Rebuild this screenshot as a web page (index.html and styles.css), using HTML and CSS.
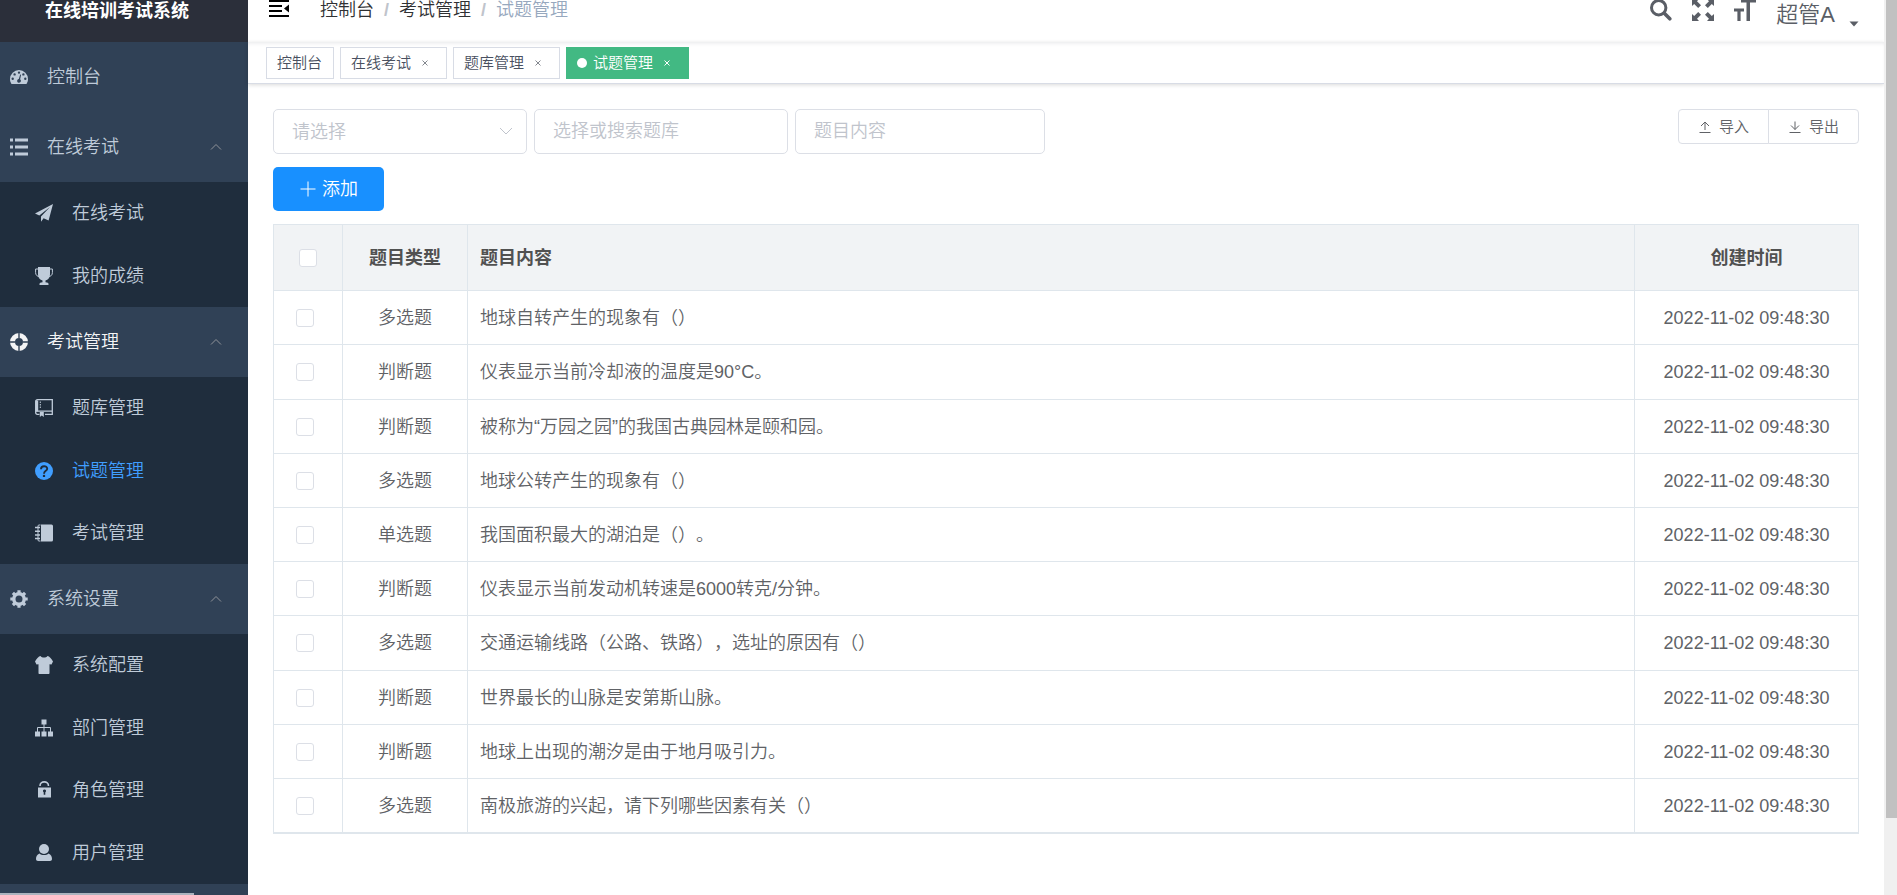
FILE: index.html
```
<!DOCTYPE html>
<html lang="zh-CN">
<head>
<meta charset="utf-8">
<title>在线培训考试系统</title>
<link rel="stylesheet" href="styles.css">
</head>
<body>
<div class="app">
  <aside class="sidebar">
    <h1 class="logo">在线培训考试系统</h1>
    <nav class="menu">
      <a class="menu-item" href="#">
        <svg class="icon" viewBox="0 0 18 18"><path fill="currentColor" fill-rule="evenodd" d="M9 2a9 9 0 0 0-9 9c0 2 .6 3.500 1.500 5h15c.9-1.500 1.500-3 1.500-5a9 9 0 0 0-9-9zM9 3.400a1.200 1.200 0 1 1 0 2.400 1.200 1.200 0 0 1 0-2.400zM4.600 5.200a1.200 1.200 0 1 1 0 2.400 1.200 1.200 0 0 1 0-2.400zM13.400 5.200a1.200 1.200 0 1 1 0 2.400 1.200 1.200 0 0 1 0-2.400zM2.700 9.600a1.200 1.200 0 1 1 0 2.400 1.200 1.200 0 0 1 0-2.400zM15.300 9.600a1.200 1.200 0 1 1 0 2.400 1.200 1.200 0 0 1 0-2.400zM10.200 6.500l.9.3-1 4.500a1.900 1.900 0 1 1-1.300-.3z"/></svg>
        <span>控制台</span>
      </a>
      <a class="menu-item" href="#">
        <svg class="icon" viewBox="0 0 18 18"><path fill="currentColor" d="M0 .5h3v3H0zM5 .5h13v3H5zM0 7.500h3v3H0zM5 7.500h13v3H5zM0 14.500h3v3H0zM5 14.500h13v3H5z"/></svg>
        <span>在线考试</span>
        <svg class="arrow" viewBox="0 0 12 8"><path d="M1 6.500l5-5 5 5"/></svg>
      </a>
      <div class="submenu">
        <a class="sub-item" href="#">
          <svg class="icon" viewBox="0 0 18 18"><path fill="currentColor" d="M18 0L0 9.500l4.300 1.900L15 3 6 12.500v5.300l2.600-3.600 5 2.300z"/></svg>
          <span>在线考试</span>
        </a>
        <a class="sub-item" href="#">
          <svg class="icon" viewBox="0 0 18 18"><path fill="currentColor" d="M3 0h12v7.500c0 3-2 5.500-4.500 6v1.800c2 0 3 .7 3 1.700v1h-9v-1c0-1 1-1.700 3-1.700v-1.800C5 13 3 10.500 3 7.500z"/><path fill="none" stroke="currentColor" d="M3.500 2H.6v3.500c0 2.500 1.500 4 4 4M14.500 2h2.900v3.500c0 2.500-1.500 4-4 4"/></svg>
          <span>我的成绩</span>
        </a>
      </div>
      <a class="menu-item is-open" href="#">
        <svg class="icon" viewBox="0 0 18 18"><circle cx="9" cy="9" r="6.500" fill="none" stroke="currentColor" stroke-width="5"/><path stroke="#304156" stroke-width="1.400" d="M9 0v5M9 13v5M0 9h5M13 9h5"/></svg>
        <span>考试管理</span>
        <svg class="arrow" viewBox="0 0 12 8"><path d="M1 6.500l5-5 5 5"/></svg>
      </a>
      <div class="submenu">
        <a class="sub-item" href="#">
          <svg class="icon" viewBox="0 0 18 18"><path fill="none" stroke="currentColor" stroke-width="1.300" d="M2.500.7h14.800v14.600H10M4.500 15.300H2.300A1.600 1.600 0 0 1 .7 13.500V2.500A1.800 1.800 0 0 1 2.500.7M1 12.200h16"/><path fill="currentColor" d="M.6 1.500h2.600v11H.6zM4.800 2.500h1v1.500h-1zM4.800 5h1v1.500h-1zM4.800 7.500h1V9h-1zM4.800 13h4v5l-2-1.500-2 1.500z"/></svg>
          <span>题库管理</span>
        </a>
        <a class="sub-item is-active" href="#">
          <svg class="icon" viewBox="0 0 18 18"><circle cx="9" cy="9" r="9" fill="currentColor"/><path fill="none" stroke="#1f2d3d" stroke-width="1.900" d="M6 7.200c0-4 6.200-3.800 6.200-.5C12.200 9 9 8.700 9 11.700"/><path fill="#1f2d3d" d="M7.900 12.900h2.200V15H7.900z"/></svg>
          <span>试题管理</span>
        </a>
        <a class="sub-item" href="#">
          <svg class="icon" viewBox="0 0 18 18"><path fill="currentColor" d="M6 .5h10.500A1.500 1.500 0 0 1 18 2v14a1.500 1.500 0 0 1-1.500 1.500H6z"/><path fill="none" stroke="currentColor" d="M5.500 1H4a1 1 0 0 0-1 1v14a1 1 0 0 0 1 1h1.500"/><path stroke="currentColor" stroke-width="1.500" d="M0 3.500h5M0 7.200h5M0 10.900h5M0 14.600h5"/></svg>
          <span>考试管理</span>
        </a>
      </div>
      <a class="menu-item" href="#">
        <svg class="icon" viewBox="0 0 18 18"><circle cx="9" cy="9" r="5.200" fill="none" stroke="currentColor" stroke-width="3.400"/><path stroke="currentColor" stroke-width="3.200" d="M9 .3v3M9 14.700v3M.3 9h3M14.700 9h3M2.900 2.900l2 2M13.100 13.100l2 2M15.100 2.900l-2 2M4.900 13.100l-2 2"/></svg>
        <span>系统设置</span>
        <svg class="arrow" viewBox="0 0 12 8"><path d="M1 6.500l5-5 5 5"/></svg>
      </a>
      <div class="submenu">
        <a class="sub-item" href="#">
          <svg class="icon" viewBox="0 0 18 18"><path fill="currentColor" d="M5.500 0c1.500 2 5.500 2 7 0 2 .6 3.500 2 5.500 5.500l-1.500 3-2-.3V17c0 .6-.4 1-1 1h-9c-.6 0-1-.4-1-1V8.200l-2 .3-1.500-3C2 2 3.500.6 5.500 0z"/></svg>
          <span>系统配置</span>
        </a>
        <a class="sub-item" href="#">
          <svg class="icon" viewBox="0 0 18 18"><path fill="currentColor" d="M6.500.5h5v5h-5zM0 12.500h5v5H0zM6.500 12.500h5v5h-5zM13 12.500h5v5h-5z"/><path fill="none" stroke="currentColor" d="M9 5v8M2.500 13V8.500h13V13"/></svg>
          <span>部门管理</span>
        </a>
        <a class="sub-item" href="#">
          <svg class="icon" viewBox="0 0 18 18"><path fill="none" stroke="currentColor" stroke-width="1.600" d="M5 5C5-.5 13.500-.5 13.500 5"/><path fill="currentColor" fill-rule="evenodd" d="M3 6.500h13v10H3zM9.500 8.500a1.500 1.500 0 0 0-.8 2.800v2.400h1.600v-2.400a1.500 1.500 0 0 0-.8-2.800z"/></svg>
          <span>角色管理</span>
        </a>
        <a class="sub-item" href="#">
          <svg class="icon" viewBox="0 0 18 18"><circle cx="9" cy="5" r="5" fill="currentColor"/><path fill="currentColor" d="M4.500 9.500C6.500 11.500 11.500 11.500 13.500 9.500 16 10.500 17 12.500 17 15c0 1.200-.8 2-2 2H3c-1.200 0-2-.8-2-2 0-2.500 1-4.500 3.500-5.500z"/></svg>
          <span>用户管理</span>
        </a>
      </div>
    </nav>
    <div class="h-thumb"></div>
  </aside>

  <div class="main">
    <header class="navbar">
      <div class="navbar-inner">
        <button class="icon-button" type="button" aria-label="收起菜单">
          <svg class="hamburger" viewBox="0 0 20 20"><path fill="none" stroke="#000" stroke-width="2" d="M0 4h20M0 9h13M0 14h13M0 19h20"/><path fill="#000" d="M20 7.500v8l-5-4z"/></svg>
        </button>
        <nav class="breadcrumb">
          <a href="#">控制台</a><span class="slash">/</span><a href="#">考试管理</a><span class="slash">/</span><span class="current">试题管理</span>
        </nav>
        <div class="tools">
          <button class="icon-button" type="button" aria-label="搜索">
            <svg class="tool" viewBox="0 0 22 22"><circle cx="8.700" cy="8.700" r="7.200" fill="none" stroke="currentColor" stroke-width="3"/><path stroke="currentColor" stroke-width="3.600" stroke-linecap="round" d="M14.300 14.300l5.500 5.500"/></svg>
          </button>
          <button class="icon-button" type="button" aria-label="全屏">
            <svg class="tool" viewBox="0 0 22 22"><path fill="currentColor" d="M0 0h7L5 2.200l4 4L6.200 9l-4-4L0 7zM22 0v7l-2.200-2-4 4L13 6.200l4-4L15 0zM0 22v-7l2.200 2 4-4L9 15.800l-4 4L7 22zM22 22h-7l2-2.200-4-4 2.800-2.800 4 4 2.200-2z"/></svg>
          </button>
          <button class="icon-button" type="button" aria-label="字号">
            <svg class="tool" viewBox="0 0 22 22"><path fill="currentColor" d="M7 0h15v3.500h-6V22h-3.500V3.500H7zM0 9.500h10v3H6.600V22H3.400v-9.500H0z"/></svg>
          </button>
          <button class="user" type="button"><span>超管A</span><svg class="caret" viewBox="0 0 10 6"><path fill="currentColor" d="M.5.500h9L5 5.500z"/></svg></button>
        </div>
      </div>
    </header>

    <nav class="tags">
      <a class="tag" href="#">控制台</a>
      <a class="tag" href="#">在线考试<svg class="close" viewBox="0 0 20 20"><path d="M7.500 7.500l5 5M12.500 7.500l-5 5"/></svg></a>
      <a class="tag" href="#">题库管理<svg class="close" viewBox="0 0 20 20"><path d="M7.500 7.500l5 5M12.500 7.500l-5 5"/></svg></a>
      <a class="tag tag-active" href="#"><i class="dot"></i>试题管理<svg class="close" viewBox="0 0 20 20"><path d="M7.500 7.500l5 5M12.500 7.500l-5 5"/></svg></a>
    </nav>

    <main class="content">
      <div class="filters">
        <div class="fields">
          <div class="select-wrap">
            <select class="field" aria-label="题目类型"><option>请选择</option></select>
            <svg class="chevron" viewBox="0 0 14 8"><path d="M1 1l6 6 6-6"/></svg>
          </div>
          <input class="field" type="text" placeholder="选择或搜索题库" aria-label="题库">
          <input class="field field-text" type="text" placeholder="题目内容" aria-label="题目内容">
        </div>
        <div class="group">
          <button class="small-button" type="button"><svg class="small-icon" viewBox="0 0 12 12"><path d="M6 9V1M2 5l4-4 4 4M.5 11.500h11"/></svg>导入</button>
          <button class="small-button" type="button"><svg class="small-icon" viewBox="0 0 12 12"><path d="M6 .5v8M2 4.500l4 4 4-4M.5 11.500h11"/></svg>导出</button>
        </div>
      </div>
      <button class="add" type="button"><svg class="plus" viewBox="0 0 16 16"><path d="M8 .5v15M.5 8h15"/></svg>添加</button>

      <table class="table">
        <colgroup><col class="col-check"><col class="col-type"><col><col class="col-time"></colgroup>
        <thead>
          <tr><th class="center"><input class="check" type="checkbox" aria-label="全选"></th><th class="center">题目类型</th><th>题目内容</th><th class="center">创建时间</th></tr>
        </thead>
        <tbody>
          <tr><td class="pick"><input class="check" type="checkbox" aria-label="选择"></td><td class="center">多选题</td><td>地球自转产生的现象有（）</td><td class="center">2022-11-02 09:48:30</td></tr>
          <tr><td class="pick"><input class="check" type="checkbox" aria-label="选择"></td><td class="center">判断题</td><td>仪表显示当前冷却液的温度是90°C。</td><td class="center">2022-11-02 09:48:30</td></tr>
          <tr><td class="pick"><input class="check" type="checkbox" aria-label="选择"></td><td class="center">判断题</td><td>被称为“万园之园”的我国古典园林是颐和园。</td><td class="center">2022-11-02 09:48:30</td></tr>
          <tr><td class="pick"><input class="check" type="checkbox" aria-label="选择"></td><td class="center">多选题</td><td>地球公转产生的现象有（）</td><td class="center">2022-11-02 09:48:30</td></tr>
          <tr><td class="pick"><input class="check" type="checkbox" aria-label="选择"></td><td class="center">单选题</td><td>我国面积最大的湖泊是（）。</td><td class="center">2022-11-02 09:48:30</td></tr>
          <tr><td class="pick"><input class="check" type="checkbox" aria-label="选择"></td><td class="center">判断题</td><td>仪表显示当前发动机转速是6000转克/分钟。</td><td class="center">2022-11-02 09:48:30</td></tr>
          <tr><td class="pick"><input class="check" type="checkbox" aria-label="选择"></td><td class="center">多选题</td><td>交通运输线路（公路、铁路），选址的原因有（）</td><td class="center">2022-11-02 09:48:30</td></tr>
          <tr><td class="pick"><input class="check" type="checkbox" aria-label="选择"></td><td class="center">判断题</td><td>世界最长的山脉是安第斯山脉。</td><td class="center">2022-11-02 09:48:30</td></tr>
          <tr><td class="pick"><input class="check" type="checkbox" aria-label="选择"></td><td class="center">判断题</td><td>地球上出现的潮汐是由于地月吸引力。</td><td class="center">2022-11-02 09:48:30</td></tr>
          <tr><td class="pick"><input class="check" type="checkbox" aria-label="选择"></td><td class="center">多选题</td><td>南极旅游的兴起，请下列哪些因素有关（）</td><td class="center">2022-11-02 09:48:30</td></tr>
        </tbody>
      </table>
    </main>
  </div>
  <div class="scrollbar"><div class="thumb"></div></div>
</div>
</body>
</html>
```

FILE: styles.css
```
* {
  box-sizing: border-box;
}

body {
  margin: 0;
  background: #fff;
  color: #606266;
  font-family: "Liberation Sans", "Noto Sans CJK SC", sans-serif;
  font-size: 18px;
  font-weight: 350;
  line-height: 24px;
  text-spacing-trim: space-all;
}

a {
  color: inherit;
  text-decoration: none;
}

button,
input,
select {
  font: inherit;
  color: inherit;
}

svg {
  display: block;
  flex: none;
}

.app {
  display: flex;
  height: 100vh;
  overflow: hidden;
}

/* Sidebar */
.sidebar {
  display: flex;
  flex-direction: column;
  flex: none;
  width: 248px;
  overflow: hidden;
  background: #304156;
  color: #bfcbd9;
}

.logo {
  display: flex;
  flex: none;
  align-items: flex-end;
  justify-content: center;
  height: 42px;
  margin: 0;
  padding: 0 14px 19px 0;
  background: #2b2f3a;
  color: #fff;
  font-size: 18px;
  font-weight: 700;
}

.menu {
  flex: none;
}

.menu-item,
.sub-item {
  display: flex;
  align-items: center;
  gap: 19px;
}

.menu-item {
  height: 70px;
  padding: 0 26px 0 10px;
}

.submenu {
  background: #1f2d3d;
}

.sub-item {
  height: 62px;
  padding-left: 35px;
}

.sub-item:nth-child(even) {
  height: 63px;
}

.icon {
  width: 18px;
  height: 18px;
}

.arrow {
  width: 12px;
  height: 8px;
  margin-left: auto;
}

.arrow path {
  fill: none;
  stroke: #909399;
}

.is-open {
  color: #f4f4f5;
}

.is-active {
  color: #409eff;
}

.h-thumb {
  width: 194px;
  height: 2px;
  margin-top: auto;
  background: #aab2bd;
}

/* Top bar */
.main {
  flex: 1;
  min-width: 0;
}

.navbar {
  display: flex;
  align-items: flex-end;
  height: 42px;
  overflow: hidden;
}

.navbar-inner {
  display: flex;
  flex: 1;
  align-items: center;
  height: 62px;
  padding: 0 25px 0 21px;
}

.icon-button {
  padding: 0;
  border: 0;
  background: none;
}

.hamburger {
  width: 20px;
  height: 20px;
}

.navbar-inner > .icon-button {
  padding-bottom: 8px;
}

.breadcrumb {
  display: flex;
  margin-left: 31px;
  padding-bottom: 2px;
  color: #303133;
}

.slash {
  margin: 0 10px;
  color: #c0c4cc;
  font-weight: 700;
}

.current {
  color: #97a8be;
}

.tools {
  display: flex;
  align-items: center;
  gap: 20px;
  margin-left: auto;
  color: #5a5e66;
}

.tool {
  width: 22px;
  height: 22px;
}

.tools .icon-button {
  padding-bottom: 2px;
}

.user {
  display: flex;
  align-items: flex-end;
  gap: 14px;
  padding: 8px 0 0;
  border: 0;
  background: none;
  font-size: 22px;
}

.caret {
  width: 10px;
  height: 6px;
}

/* Page tabs */
.tags {
  display: flex;
  gap: 6px;
  height: 42px;
  padding: 5px 18px;
  border-bottom: 1px solid #d8dce5;
  box-shadow: 0 1px 4px rgba(0, 0, 0, 0.15), inset 0 3px 4px -2px rgba(0, 21, 41, 0.1);
}

.tag {
  display: flex;
  align-items: center;
  height: 32px;
  padding: 0 11px 0 10px;
  border: 1px solid #d8dce5;
  color: #495060;
  font-size: 15px;
}

.tag-active {
  border-color: #42b983;
  background: #42b983;
  color: #fff;
}

.dot {
  width: 10px;
  height: 10px;
  margin-right: 6px;
  border-radius: 50%;
  background: #fff;
}

.close {
  width: 20px;
  height: 20px;
  margin-left: 4px;
}

.close path {
  stroke: #84888f;
}

.tag-active .close path {
  stroke: #fff;
}

/* Filters */
.content {
  padding: 25px;
}

.filters,
.fields,
.group {
  display: flex;
}

.filters {
  align-items: flex-start;
  justify-content: space-between;
}

.fields {
  gap: 7px;
}

.select-wrap {
  position: relative;
}

.field {
  display: block;
  width: 254px;
  height: 45px;
  padding: 0 18px;
  border: 1px solid #dcdfe6;
  border-radius: 5px;
  background: #fff;
  color: #c0c4cc;
  appearance: none;
}

.field-text {
  width: 250px;
}

.field::placeholder {
  color: #c0c4cc;
}

.chevron {
  position: absolute;
  top: 18px;
  right: 14px;
  width: 14px;
  height: 8px;
  pointer-events: none;
}

.chevron path {
  fill: none;
  stroke: #c0c4cc;
}

.small-button {
  display: flex;
  align-items: center;
  gap: 8px;
  height: 35px;
  padding: 0 19px 0 20px;
  border: 1px solid #dcdfe6;
  border-radius: 4px 0 0 4px;
  background: #fff;
  font-size: 15px;
}

.small-button + .small-button {
  margin-left: -1px;
  border-radius: 0 4px 4px 0;
}

.small-icon {
  width: 12px;
  height: 12px;
}

.small-icon path,
.plus path {
  fill: none;
  stroke: currentColor;
}

.add {
  display: flex;
  align-items: center;
  gap: 6px;
  height: 44px;
  margin: 13px 0;
  padding: 0 26px 0 27px;
  border: 0;
  border-radius: 5px;
  background: #1890ff;
  color: #fff;
}

.plus {
  width: 16px;
  height: 16px;
}

/* Question table */
.table {
  width: 100%;
  border: 1px solid #dfe6ec;
  border-width: 1px 0 1px 1px;
  border-spacing: 0;
  table-layout: fixed;
}

.col-check {
  width: 69px;
}

.col-type {
  width: 125px;
}

.col-time {
  width: 224px;
}

.table th,
.table td {
  height: 54px;
  padding: 0 12px;
  border: 1px solid #dfe6ec;
  border-width: 0 1px 1px 0;
  text-align: left;
}

.table th {
  height: 66px;
  background: #f1f3f5;
  color: #515151;
  font-weight: 700;
}

.table tr:nth-child(5n + 2) td {
  height: 55px;
}

.table .center,
.table .pick {
  text-align: center;
}

.table .pick {
  padding-right: 18px;
}

.check {
  display: block;
  width: 18px;
  height: 18px;
  margin: 0 auto;
  border: 1px solid #dcdfe6;
  border-radius: 3px;
  background: #fff;
  appearance: none;
}

/* Page scrollbar */
.scrollbar {
  flex: none;
  width: 13px;
  padding-left: 2px;
  background: #f0f0f0;
}

.thumb {
  height: 818px;
  background: #c1c1c1;
}
```
